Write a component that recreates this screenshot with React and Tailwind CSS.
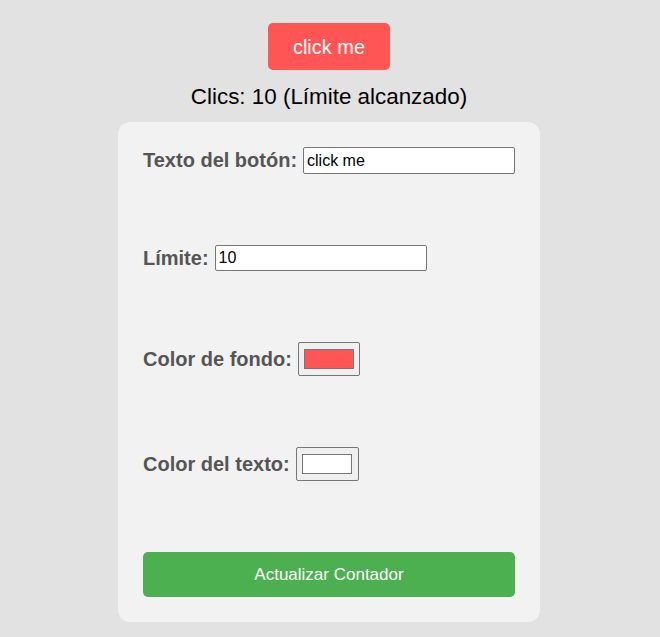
import React, { useState } from 'react';

const font = { fontFamily: '"Liberation Sans", Arial, sans-serif' };

function ColorSwatch({ color, wide }) {
  return (
    <div
      className={`ml-[6px] flex h-[34px] shrink-0 items-center justify-center rounded-[2px] border border-[#767676] bg-[#efefef] ${wide ? 'w-[62px]' : 'w-[63px]'}`}
    >
      <div className="h-[20px] w-[50px] border border-[#777777]" style={{ backgroundColor: color }} />
    </div>
  );
}

export default function App() {
  const [text, setText] = useState('click me');
  const [limit, setLimit] = useState('10');
  const clicks = 10;

  return (
    <div className="min-h-[637px] w-full bg-[#e2e2e2] pt-[23px] pr-[2px]" style={font}>
      <div className="flex flex-col items-center">
        <button className="h-[47px] w-[122px] rounded-[5px] bg-[#ff5555] text-[20px] text-white">
          click me
        </button>
        <p className="mt-[14px] mb-[13px] text-[22.4px] leading-[25px] text-black">
          Clics: {clicks} (Límite alcanzado)
        </p>

        <div className="w-[422px] rounded-[12px] bg-[#f2f2f2] p-[25px]">
          <div className="flex flex-col gap-[71px]">
            <div className="flex items-center">
              <label className="shrink-0 whitespace-nowrap text-[20px] leading-[23px] font-bold text-[#555555]">Texto del botón:</label>
              <input
                value={text}
                onChange={(e) => setText(e.target.value)}
                className="ml-[6px] h-[27px] w-[212px] shrink-0 rounded-[2px] border border-[#767676] bg-white px-[3px] text-[16px] text-black outline-none"
              />
            </div>
            <div className="flex items-center">
              <label className="shrink-0 whitespace-nowrap text-[20px] leading-[23px] font-bold text-[#555555]">Límite:</label>
              <input
                value={limit}
                onChange={(e) => setLimit(e.target.value)}
                className="ml-[6px] h-[26px] w-[212px] shrink-0 rounded-[2px] border border-[#767676] bg-white px-[3px] text-[16px] text-black outline-none"
              />
            </div>
            <div className="flex items-center">
              <label className="shrink-0 whitespace-nowrap text-[20px] leading-[23px] font-bold text-[#555555]">Color de fondo:</label>
              <ColorSwatch color="#ff5555" wide />
            </div>
            <div className="flex items-center">
              <label className="shrink-0 whitespace-nowrap text-[20px] leading-[23px] font-bold text-[#555555]">Color del texto:</label>
              <ColorSwatch color="#ffffff" />
            </div>
            <button className="h-[45px] w-full rounded-[5px] bg-[#4caf50] text-[17px] text-white">
              Actualizar Contador
            </button>
          </div>
        </div>
      </div>
    </div>
  );
}
